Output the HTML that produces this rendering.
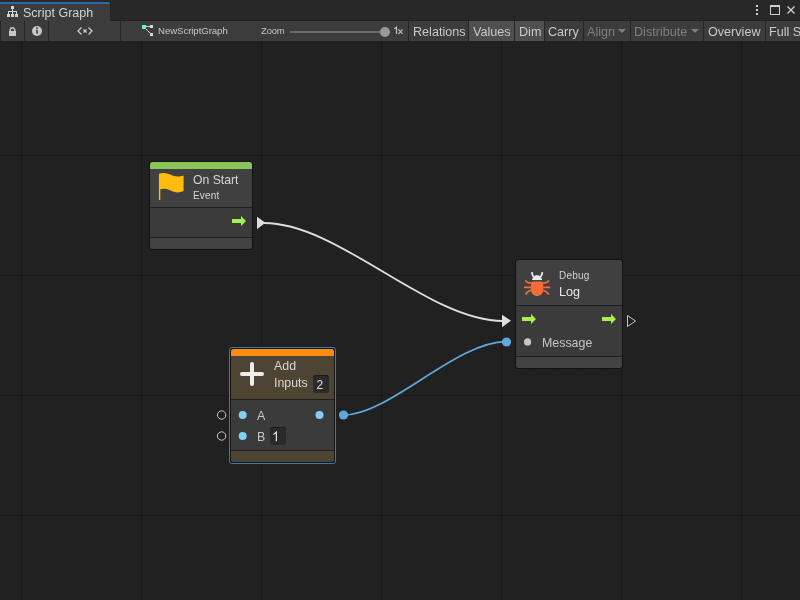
<!DOCTYPE html>
<html><head><meta charset="utf-8">
<style>
*{margin:0;padding:0;box-sizing:border-box}
html,body{width:800px;height:600px;overflow:hidden;background:#212121;font-family:"Liberation Sans",sans-serif;color:#d2d2d2}
.a{position:absolute}
.t,.btn,.numbox{will-change:transform}
#topbar{left:0;top:0;width:800px;height:21px;background:#282828}
#tab{left:0;top:2px;width:110px;height:19px;background:#3c3c3c;border-top:2px solid #2c69a2;border-top-right-radius:2px}
#toolbar{left:0;top:21px;width:800px;height:20px;background:#3c3c3c}
#graph{left:0;top:41px;width:800px;height:559px;background-color:#212121;
 background-image:
  linear-gradient(to right, #1a1a1a 1px, transparent 1px),
  linear-gradient(to bottom, #1a1a1a 1px, transparent 1px),
  linear-gradient(to right, #202020 1px, transparent 1px),
  linear-gradient(to bottom, #202020 1px, transparent 1px);
 background-size:120px 120px,120px 120px,12px 12px,12px 12px;
 background-position:21px -6px,21px -6px,9px -6px,9px -6px}
.sep{top:21px;width:1px;height:20px;background:#262626}
.btn{top:22px;height:20px;font-size:12.6px;line-height:21px;color:#c8c8c8;white-space:nowrap}
.on{background:#4f4f4f}
.dis{color:#7f7f7f}
.node{box-shadow:0 0 0 1px #121212;border-radius:2.5px;overflow:hidden}
.stripe{left:0;top:0;height:7px;width:100%}
.hdr{left:0;width:100%;background:#404040}
.hsep{left:0;width:100%;height:1px;background:#1f1f1f}
.body{left:0;width:100%;background:#3b3b3b}
.foot{left:0;width:100%;background:#434343}
.t{white-space:nowrap;color:#d6d6d6}
.numbox{background:#2a2a2a;border-radius:3px;box-shadow:inset 0 1px 0 #1b1b1b;font-size:12px;color:#e0e0e0;text-align:center;line-height:18px}
</style></head><body>
<div id="topbar" class="a"></div>
<div class="a" style="left:110px;top:20px;width:690px;height:1px;background:#232323"></div>
<div class="a" style="left:110px;top:2px;width:1px;height:19px;background:#252525"></div>
<div id="tab" class="a"></div>
<!-- tab icon -->
<svg class="a" style="left:0;top:0" width="120" height="21" viewBox="0 0 120 21">
 <g fill="#d4d4d4">
  <rect x="11" y="6" width="3" height="3"/>
  <rect x="12" y="9" width="1" height="2"/>
  <rect x="8" y="11" width="9" height="1"/>
  <rect x="8" y="12" width="1" height="2"/><rect x="12" y="12" width="1" height="2"/><rect x="16" y="12" width="1" height="2"/>
  <rect x="7" y="14" width="3" height="3"/><rect x="11" y="14" width="3" height="3"/><rect x="15" y="14" width="3" height="3"/>
 </g>
</svg>
<div class="a t" style="left:23px;top:5px;font-size:12.5px;line-height:17px;color:#d2d2d2">Script Graph</div>
<!-- window icons -->
<svg class="a" style="left:740px;top:0" width="60" height="21" viewBox="0 0 60 21">
 <g fill="#d0d0d0">
  <rect x="16" y="5" width="2" height="2"/><rect x="16" y="9" width="2" height="2"/><rect x="16" y="13" width="2" height="2"/>
 </g>
 <rect x="30.5" y="5.5" width="9" height="9" fill="none" stroke="#d0d0d0" stroke-width="1"/>
 <rect x="30" y="5" width="10" height="2" fill="#d0d0d0"/>
 <path d="M47.5 6.5 L54.5 13.5 M54.5 6.5 L47.5 13.5" stroke="#d0d0d0" stroke-width="1.3"/>
</svg>

<div id="toolbar" class="a"></div>
<div class="a sep" style="left:0"></div>
<div class="a sep" style="left:24px"></div>
<div class="a sep" style="left:48px"></div>
<div class="a sep" style="left:120px"></div>
<div class="a sep" style="left:408px"></div>
<div class="a sep" style="left:468px"></div>
<div class="a sep" style="left:514px"></div>
<div class="a sep" style="left:544px"></div>
<div class="a sep" style="left:583px"></div>
<div class="a sep" style="left:630px"></div>
<div class="a sep" style="left:703px"></div>
<div class="a sep" style="left:765px"></div>
<div class="a" style="left:0;top:41px;width:800px;height:1px;background:#191919"></div>
<!-- toolbar icons -->
<svg class="a" style="left:0;top:21px" width="160" height="20" viewBox="0 21 160 20">
 <g fill="#c8c8c8">
  <path d="M10.25 31.5 V30 a2.25 2.25 0 0 1 4.5 0 V31.5" fill="none" stroke="#c8c8c8" stroke-width="1.5"/>
  <rect x="9" y="31" width="7" height="5"/>
  <circle cx="37" cy="31" r="5"/>
 </g>
 <rect x="36.2" y="27.3" width="1.6" height="1.6" fill="#3c3c3c"/>
 <rect x="36.2" y="29.8" width="1.6" height="3.8" fill="#3c3c3c"/>
 <path d="M81.5 27.5 L78 31 L81.5 34.5 M88.5 27.5 L92 31 L88.5 34.5 M83.5 29.5 L86.5 32.5 M86.5 29.5 L83.5 32.5" fill="none" stroke="#d0d0d0" stroke-width="1.2"/>
 <rect x="142" y="25" width="4" height="4" fill="#66f0d8"/>
 <rect x="150" y="25" width="3" height="3" fill="#d8d8d8"/>
 <rect x="150" y="33" width="3" height="3" fill="#d8d8d8"/>
 <path d="M146 26.5 H150 M145.5 28.5 L150.5 33.5" stroke="#d8d8d8" stroke-width="1"/>
</svg>
<div class="a btn" style="left:158px;top:20px;font-size:9.6px;letter-spacing:-0.05px;color:#c8c8c8">NewScriptGraph</div>
<div class="a btn" style="left:261px;top:20px;font-size:9.4px;letter-spacing:-0.1px;color:#c4c4c4">Zoom</div>
<div class="a" style="left:290px;top:31px;width:95px;height:2px;background:#6b6b6b"></div>
<div class="a" style="left:380px;top:26.5px;width:10px;height:10px;border-radius:5px;background:#999"></div>
<svg class="a" style="left:390px;top:24px" width="16" height="14" viewBox="390 24 16 14"><path d="M394.3 28.9 L396.5 27.2 V34" fill="none" stroke="#c4c4c4" stroke-width="1.15"/><path d="M398.4 29.3 L402.6 34 M402.6 29.3 L398.4 34" fill="none" stroke="#c4c4c4" stroke-width="1.1"/></svg>

<div class="a btn" style="left:413px">Relations</div>
<div class="a on" style="left:469px;top:21px;width:45px;height:20px"></div>
<div class="a btn" style="left:473px">Values</div>
<div class="a on" style="left:515px;top:21px;width:29px;height:20px"></div>
<div class="a btn" style="left:519px">Dim</div>
<div class="a btn" style="left:548px">Carry</div>
<div class="a btn dis" style="left:587px">Align</div>
<svg class="a" style="left:617px;top:27px" width="10" height="8"><path d="M1 1.9 H9 L5 6.1 Z" fill="#7f7f7f"/></svg>
<div class="a btn dis" style="left:634px">Distribute</div>
<svg class="a" style="left:690px;top:27px" width="10" height="8"><path d="M1.1 1.9 H8.9 L5 6.1 Z" fill="#7f7f7f"/></svg>
<div class="a btn" style="left:708px">Overview</div>
<div class="a btn" style="left:769px">Full Screen</div>

<div id="graph" class="a"></div>

<!-- edges -->
<svg class="a" style="left:0;top:0" width="800" height="600" viewBox="0 0 800 600">
 <path d="M264 223 C 339 223, 428 321, 503 321" fill="none" stroke="#dedede" stroke-width="1.8"/>
 <path d="M343.5 415 C 389.5 415, 456 341.6, 506 341.6" fill="none" stroke="#5ea8dc" stroke-width="1.8"/>
</svg>

<!-- On Start node -->
<div class="a node" style="left:150px;top:162px;width:102px;height:87px">
 <div class="a stripe" style="background:#88c459"></div>
 <div class="a hdr" style="top:7px;height:38px"></div>
 <div class="a hsep" style="top:45px"></div>
 <div class="a body" style="top:46px;height:29px"></div>
 <div class="a hsep" style="top:75px"></div>
 <div class="a foot" style="top:76px;height:11px"></div>
</div>
<svg class="a" style="left:150px;top:162px" width="102" height="87" viewBox="0 0 102 87">
 <path d="M8.9 11.8 C 11 10.8, 15 10.6, 19.5 12.3 C 25 14.8, 29 15.2, 33.6 13.6 V 29 C 29 31.2, 25 30.8, 20 28.3 C 16 26.4, 12.5 26.5, 10.3 27.3 V 38 H 8.9 Z" fill="#ffbc0c"/>
 <path d="M82 57 H91 V54 L96 59 L91 64 V61 H82 Z" fill="#a6f24c"/>
</svg>
<div class="a t" style="left:193px;top:173px;font-size:12.2px;line-height:15px">On Start</div>
<div class="a t" style="left:192.8px;top:189px;font-size:10px;line-height:13px;letter-spacing:0.2px">Event</div>
<svg class="a" style="left:250px;top:210px" width="30" height="30" viewBox="0 0 30 30">
 <path d="M7 6.8 L15.4 12.8 L7 19.2 Z" fill="#dedede"/>
</svg>

<!-- Debug Log node -->
<div class="a node" style="left:516px;top:260px;width:106px;height:108px">
 <div class="a hdr" style="top:0;height:45px"></div>
 <div class="a hsep" style="top:45px"></div>
 <div class="a body" style="top:46px;height:50px"></div>
 <div class="a hsep" style="top:96px"></div>
 <div class="a foot" style="top:97px;height:11px"></div>
</div>
<svg class="a" style="left:516px;top:260px" width="106" height="108" viewBox="0 0 106 108">
 <!-- bug -->
 <g transform="translate(21.1 0)">
 <path d="M-6.1 23.5 Q-6.1 21.5 -4.1 21.5 H4.1 Q6.1 21.5 6.1 23.5 V29.5 C6.1 33.5 3.5 36 0 36 C-3.5 36 -6.1 33.5 -6.1 29.5 Z" fill="#f46c38"/>
 <g stroke="#f46c38" stroke-width="1.7" fill="none">
  <path d="M-11.6 20.2 C-11.1 22 -9.6 23 -6 23"/><path d="M11.6 20.2 C11.1 22 9.6 23 6 23"/>
  <path d="M-13.1 27.3 H-6 M6 27.3 H13.1"/>
  <path d="M-6 30.2 C-8.6 31 -10.6 32.5 -11.6 34.5"/><path d="M6 30.2 C8.6 31 10.6 32.5 11.6 34.5"/>
 </g>
 <path d="M-5 20 C-5 18.8 -4.2 18.3 -3.8 17.6 C-3 15.8 -1.6 15.2 0 15.2 C1.6 15.2 3 15.8 3.8 17.6 C4.2 18.3 5 18.8 5 20 Z" fill="#ececec"/>
 <path d="M-5.3 12.2 C-5 14.5 -4.4 16 -3.2 17.4 M5.3 12.2 C5 14.5 4.4 16 3.2 17.4" stroke="#ececec" stroke-width="1.8" fill="none"/>
 </g>
 <!-- arrows -->
 <path d="M6 57 H15 V54 L20 59 L15 64 V61 H6 Z" fill="#a6f24c"/>
 <path d="M86 57 H95 V54 L100 59 L95 64 V61 H86 Z" fill="#a6f24c"/>
 <circle cx="11.6" cy="81.9" r="3.6" fill="#c8c8c8"/>
</svg>
<div class="a t" style="left:559px;top:269px;font-size:10px;line-height:13px;letter-spacing:0.2px;color:#d0d0d0">Debug</div>
<div class="a t" style="left:559px;top:285px;font-size:12.6px;line-height:15px;color:#e6e6e6">Log</div>
<div class="a t" style="left:542px;top:336px;font-size:12.4px;line-height:15px;color:#c4c4c4">Message</div>
<svg class="a" style="left:495px;top:305px" width="150" height="50" viewBox="0 0 150 50">
 <path d="M7 9.8 L16 15.8 L7 22.2 Z" fill="#dedede"/>
 <path d="M132.5 10.5 L140.5 16 L132.5 21.5 Z" fill="none" stroke="#c8c8c8" stroke-width="1"/>
 <circle cx="11.5" cy="37" r="4.6" fill="#5ea8dc"/>
</svg>

<!-- Add node -->
<div class="a" style="left:229px;top:347px;width:107px;height:117px;border:1px solid #3b7eab;border-radius:3px"></div>
<div class="a node" style="left:231px;top:349px;width:103px;height:113px;box-shadow:0 0 0 1px #141414">
 <div class="a stripe" style="background:#fe8c10"></div>
 <div class="a hdr" style="top:7px;height:43px;background:#4e4434"></div>
 <div class="a hsep" style="top:50px"></div>
 <div class="a body" style="top:51px;height:50px"></div>
 <div class="a hsep" style="top:101px"></div>
 <div class="a foot" style="top:102px;height:11px;background:#4e4434"></div>
</div>
<svg class="a" style="left:229px;top:347px" width="107" height="117" viewBox="0 0 107 117">
 <path d="M23 17 V37 M13 27 H33" stroke="#eeeeee" stroke-width="4" stroke-linecap="round"/>
 <circle cx="13.7" cy="68" r="4" fill="#80d0f8"/>
 <circle cx="13.7" cy="89" r="4" fill="#80d0f8"/>
 <circle cx="90.5" cy="68" r="4" fill="#80d0f8"/>
</svg>
<div class="a t" style="left:274px;top:359px;font-size:12.4px;line-height:15px">Add</div>
<div class="a t" style="left:274px;top:376px;font-size:12.4px;line-height:15px">Inputs</div>
<div class="a numbox" style="left:313px;top:375px;width:16px;height:18px"></div><div class="a numbox" style="left:313px;top:376px;width:16px;height:18px;text-align:left;padding-left:3.5px;line-height:19px;background:none;box-shadow:none">2</div>
<div class="a t" style="left:257px;top:409px;font-size:12.4px;line-height:15px;color:#c8c8c8">A</div>
<div class="a t" style="left:257px;top:430px;font-size:12.4px;line-height:15px;color:#c8c8c8">B</div>
<div class="a numbox" style="left:270px;top:427px;width:16px;height:18px"></div>
<svg class="a" style="left:270px;top:427px" width="16" height="18"><path d="M3.4 7.6 L6.4 5 V14.2" fill="none" stroke="#e4e4e4" stroke-width="1.2"/></svg>
<svg class="a" style="left:210px;top:400px" width="145" height="50" viewBox="0 0 145 50">
 <circle cx="11.6" cy="15" r="4.2" fill="none" stroke="#c8c8c8" stroke-width="1"/>
 <circle cx="11.6" cy="36" r="4.2" fill="none" stroke="#c8c8c8" stroke-width="1"/>
 <circle cx="133.5" cy="15" r="4.6" fill="#5ea8dc"/>
</svg>
</body></html>
